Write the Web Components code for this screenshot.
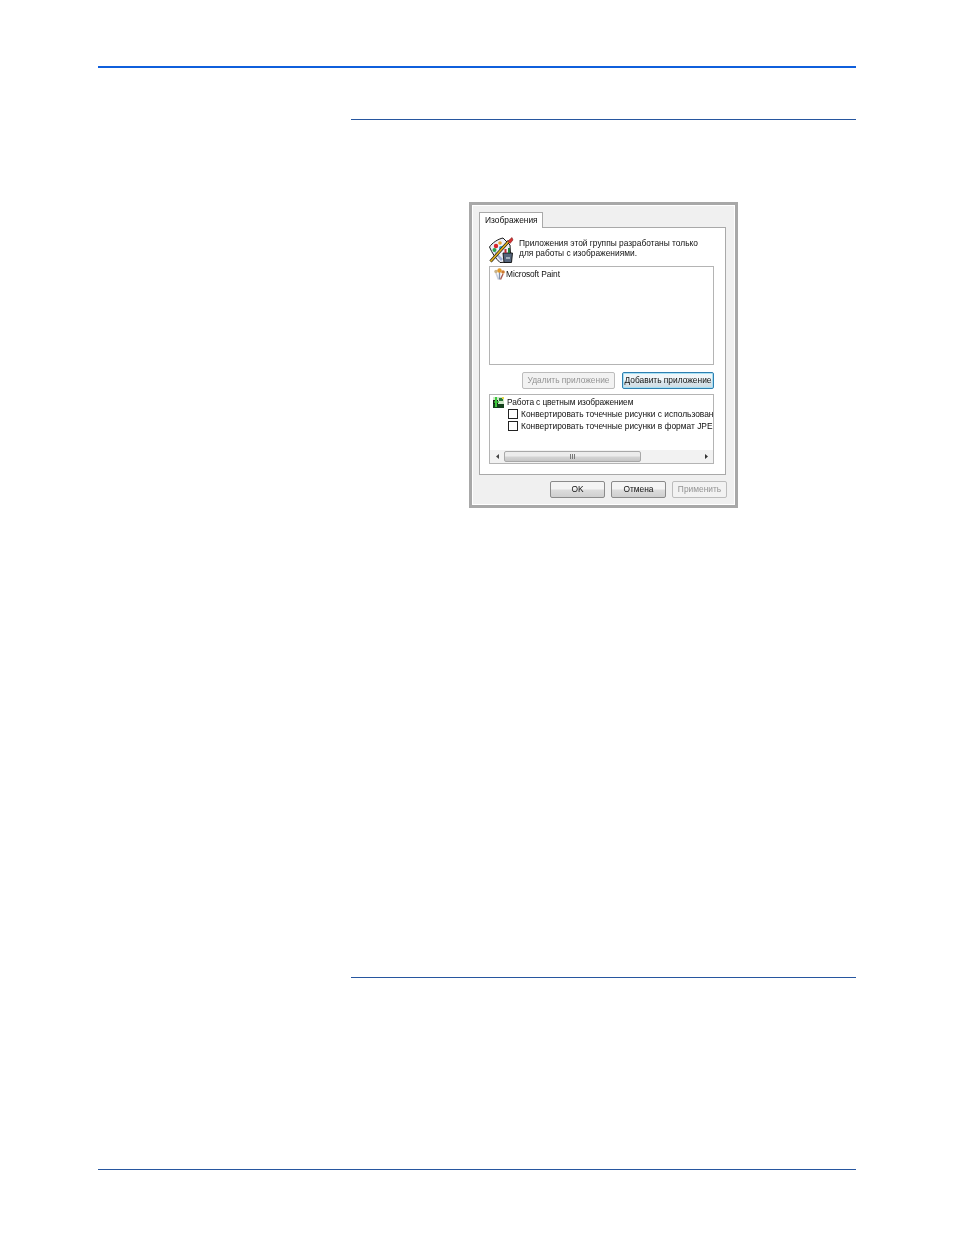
<!DOCTYPE html>
<html>
<head>
<meta charset="utf-8">
<style>
  html, body { margin: 0; background: #fff; }
  body { font-family: "Liberation Sans", Arial, sans-serif; }
</style>
</head>
<body>
<manual-page>
  <settings-dialog></settings-dialog>
</manual-page>

<script>
class ManualPage extends HTMLElement {
  constructor() {
    super();
    this.attachShadow({ mode: 'open' }).innerHTML = `
      <style>
        :host { display: block; height: 1235px; padding: 66px 98px 0; box-sizing: border-box; }
        .top { height: 2px; background: #0f5fdc; }
        .main { margin: 51px 0 0 253px; height: 859px; display: flex; flex-direction: column; }
        .rule { height: 1px; background: #27569f; flex: none; }
        .body { flex: 1; padding-top: 82px; padding-left: 118px; }
        .foot { height: 1px; background: #27569f; margin-top: 191px; }
      </style>
      <div class="top"></div>
      <div class="main">
        <div class="rule"></div>
        <div class="body"><slot></slot></div>
        <div class="rule"></div>
      </div>
      <div class="foot"></div>
    `;
  }
}

class DialogButton extends HTMLElement {
  constructor() {
    super();
    this.attachShadow({ mode: 'open' }).innerHTML = `
      <style>
        :host {
          display: flex; align-items: center; justify-content: center;
          height: 17px; box-sizing: border-box; white-space: nowrap; padding-bottom: 1px;
          font-size: 8.4px; color: #111;
          border: 1px solid #8b8b8b; border-radius: 2px;
          background: linear-gradient(#f4f4f4 0 45%, #dcdcdc 55%, #cfcfcf);
        }
        :host([disabled]) { color: #949494; border-color: #bcbcbc; background: #f2f2f2; }
        :host([focused]) {
          border-color: #2f7fb0;
          box-shadow: inset 0 0 0 1px #a8e0f4;
          background: linear-gradient(#f0f6f9 0 45%, #dbe6ec 55%, #cfdbe2);
        }
      </style>
      <slot></slot>
    `;
  }
}

class SettingsDialog extends HTMLElement {
  constructor() {
    super();
    this.attachShadow({ mode: 'open' }).innerHTML = `
      <style>
        :host {
          display: block; width: 269px; height: 306px; box-sizing: border-box;
          border: 3px solid #a8a8a8;
          background: #f0f0f0; font-size: 8.4px; color: #111;
          box-shadow: inset 0 0 0 1px #fff;
          filter: blur(.25px);
        }
        .wrap { padding: 7px 8px 0 7px; }
        .tab {
          width: 64px; height: 16px; box-sizing: border-box; margin-bottom: -1px;
          position: relative; z-index: 1;
          border: 1px solid #a9a9a9; border-bottom: 0; background: #fff;
          padding: 1px 0 0 5px; line-height: 13px;
        }
        .panel {
          width: 247px; height: 248px; box-sizing: border-box;
          border: 1px solid #a9a9a9; background: #fff;
          padding: 9px 11px 0 9px;
        }
        .intro { display: flex; gap: 5px; height: 29px; }
        .intro svg { flex: none; }
        .intro p { margin: 0; padding-top: 1px; line-height: 10px; white-space: nowrap; }
        .list {
          height: 99px; box-sizing: border-box; border: 1px solid #b4b4b4;
          padding: 1px 0 0 4px; display: flex; gap: 1px; align-items: flex-start; line-height: 11px;
        }
        .list span { padding-top: 1px; letter-spacing: -.1px; }
        .actions { display: flex; justify-content: flex-end; gap: 7px; margin-top: 7px; }
        .actions dialog-button:first-child { width: 93px; }
        .actions dialog-button:last-child { width: 92px; }
        .tree {
          margin-top: 5px; height: 70px; box-sizing: border-box; border: 1px solid #b4b4b4;
          display: flex; flex-direction: column; overflow: hidden;
        }
        .rows { flex: 1; padding: 1px 0 0 3px; white-space: nowrap; overflow: hidden; }
        .row { display: flex; align-items: center; height: 12px; gap: 3px; letter-spacing: -.12px; }
        .row.sub { padding-left: 15px; letter-spacing: 0; }
        .check { width: 10px; height: 10px; box-sizing: border-box; flex: none; border: 1px solid #222; background: #fff; }
        .scroll { height: 13px; flex: none; display: flex; align-items: center; background: #f2f2f2; }
        .arrow { width: 14px; flex: none; display: flex; justify-content: center; }
        .thumb {
          width: 137px; height: 11px; box-sizing: border-box; flex: none;
          border: 1px solid #a8a8a8; border-radius: 2px;
          background: linear-gradient(#ececec 0 45%, #d4d4d4 55%, #c6c6c6);
          display: flex; justify-content: center; align-items: center; gap: 1px;
        }
        .thumb i { width: 1px; height: 5px; background: #777; }
        .spacer { flex: 1; }
        .footer { display: flex; justify-content: flex-end; gap: 6px; margin-top: 6px; width: 248px; }
        .footer dialog-button { width: 55px; }
      </style>
      <div class="wrap">
        <div class="tab">Изображения</div>
        <div class="panel">
          <div class="intro">
            <svg width="25" height="26" viewBox="0 0 25 26">
              <path d="M.5 10 C3 6 9 2 14 1 L21 8 L22 25 L11 25.5 C7 22 3 16 .5 10Z" fill="#eef0f8" stroke="#1a1a1a" stroke-width="1"/>
              <path d="M12 24 C9 20 6 17 5 14 L8 16 L14 22Z" fill="#9fb0d8"/>
              <circle cx="7" cy="9" r="2.2" fill="#d8262c"/>
              <circle cx="11" cy="6" r="1.8" fill="#e9a12a"/>
              <circle cx="5.5" cy="13" r="2" fill="#2aa04a"/>
              <circle cx="12" cy="11" r="2" fill="#2a9fd0"/>
              <path d="M14 16h9.5l-1 9.5H15z" fill="#55657c" stroke="#111" stroke-width=".9"/>
              <path d="M16.5 16v-4" stroke="#c02a3a" stroke-width="2"/>
              <path d="M20 16v-5" stroke="#1f7a3a" stroke-width="2"/>
              <path d="M17 21h4" stroke="#d8dfe8" stroke-width="1.2"/>
              <path d="M1.5 24.5 L20 4" stroke="#1a1a1a" stroke-width="3"/>
              <path d="M1.5 24.5 L20 4" stroke="#e0b020" stroke-width="1.7"/>
              <path d="M19 4l4-3.5 1 2.5-3 3.5z" fill="#d83030" stroke="#611" stroke-width=".5"/>
            </svg>
            <p>Приложения этой группы разработаны только<br>для работы с изображениями.</p>
          </div>
          <div class="list">
            <svg width="11" height="12" viewBox="0 0 11 12">
              <path d="M4.5 11.5 L2 5" stroke="#c7cfdc" stroke-width="1.6" fill="none"/>
              <path d="M5.5 11.5 L5.5 4" stroke="#7f8fa8" stroke-width="1.4" fill="none"/>
              <path d="M6.5 11.5 L9 6" stroke="#a85a50" stroke-width="1.4" fill="none"/>
              <circle cx="2" cy="3.5" r="1.7" fill="#c9b48a"/>
              <circle cx="5.5" cy="2.5" r="2.2" fill="#e29a2a"/>
              <circle cx="9" cy="4" r="1.8" fill="#cf7a30"/>
            </svg>
            <span>Microsoft Paint</span>
          </div>
          <div class="actions">
            <dialog-button disabled>Удалить приложение</dialog-button>
            <dialog-button focused>Добавить приложение</dialog-button>
          </div>
          <div class="tree">
            <div class="rows">
              <div class="row">
                <svg width="11" height="11" viewBox="0 0 11 11">
                  <rect width="11" height="11" fill="#cfe8c8"/>
                  <path d="M0 7h11v4H0z" fill="#14411c"/>
                  <path d="M0 3h5v4H0z" fill="#1a1a1a"/>
                  <path d="M3 0v10" stroke="#3cc83c" stroke-width="2"/>
                  <path d="M1 5h5" stroke="#3cc83c" stroke-width="1.4"/>
                  <rect x="6" y="1" width="4" height="3" fill="#2a7a3a"/>
                  <rect x="9" y="0" width="2" height="2" fill="#e8d84a"/>
                </svg>
                <span>Работа с цветным изображением</span>
              </div>
              <div class="row sub"><span class="check"></span><span>Конвертировать точечные рисунки с использованием</span></div>
              <div class="row sub"><span class="check"></span><span>Конвертировать точечные рисунки в формат JPEG</span></div>
            </div>
            <div class="scroll">
              <span class="arrow"><svg width="3" height="5" viewBox="0 0 3 5"><path d="M3 0v5L0 2.5z" fill="#444"/></svg></span>
              <div class="thumb"><i></i><i></i><i></i></div>
              <span class="spacer"></span>
              <span class="arrow"><svg width="3" height="5" viewBox="0 0 3 5"><path d="M0 0v5l3-2.5z" fill="#333"/></svg></span>
            </div>
          </div>
        </div>
        <div class="footer">
          <dialog-button>OK</dialog-button>
          <dialog-button>Отмена</dialog-button>
          <dialog-button disabled>Применить</dialog-button>
        </div>
      </div>
    `;
  }
}

customElements.define('manual-page', ManualPage);
customElements.define('dialog-button', DialogButton);
customElements.define('settings-dialog', SettingsDialog);
</script>
</body>
</html>
